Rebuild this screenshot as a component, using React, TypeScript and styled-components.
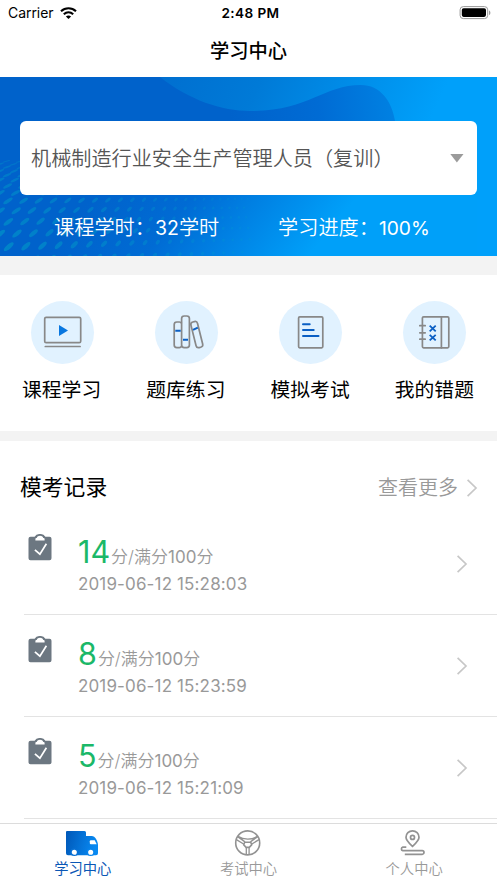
import React from "react";
import styled, { createGlobalStyle } from "styled-components";

const GlobalStyle = createGlobalStyle`
  * { box-sizing: border-box; }
  body {
    margin: 0;
    background: #fff;
    font-family: Inter, "Noto Sans CJK SC", sans-serif;
    color: #000;
  }
`;

const Screen = styled.div`
  display: flex;
  flex-direction: column;
  height: 883px;
  overflow: hidden;
  background: #fff;
`;

const StatusBar = styled.header`
  display: grid;
  grid-template-columns: 1fr auto 1fr;
  align-items: center;
  height: 26px;
  padding: 0 6px 0 8px;
  font-size: 14px;
  line-height: 26px;
`;

const Carrier = styled.div`
  display: flex;
  align-items: center;
  gap: 6px;
  letter-spacing: -0.05px;
`;

const Clock = styled.div`
  margin-left: 2px;
  font-size: 13.6px;
  font-weight: 600;
  letter-spacing: 0.4px;
`;

const BatterySlot = styled.div`
  display: flex;
  justify-content: flex-end;
`;

const TitleBar = styled.h1`
  height: 51px;
  margin: 0;
  text-align: center;
  font-size: 19.3px;
  font-weight: 500;
  line-height: 51px;
`;

const Hero = styled.section`
  position: relative;
  height: 179px;
  padding: 44px 20px 0;
  overflow: hidden;
  flex: none;
`;

const HeroArt = styled.svg`
  position: absolute;
  inset: 0;
`;

const CourseSelect = styled.div`
  position: relative;
  display: flex;
  align-items: center;
  justify-content: space-between;
  height: 74px;
  padding: 0 13px 0 11px;
  border-radius: 6px;
  background: #fff;
  color: #555;
  font-family: "Noto Sans CJK SC", sans-serif;
  font-size: 20.15px;
  font-weight: 350;
  white-space: nowrap;
`;

const CourseName = styled.span`
  padding-bottom: 2px;
`;

const Stats = styled.div`
  position: relative;
  display: flex;
  padding: 17px 0 0 34px;
  color: #fff;
  font-size: 20.2px;
  font-weight: 350;
  line-height: 31px;
  white-space: nowrap;
`;

const Stat = styled.div<{ $width?: number }>`
  width: ${(p) => (p.$width ? `${p.$width}px` : "auto")};
`;

const Latin = styled.span<{ $size: number; $track?: number }>`
  font-size: ${(p) => p.$size}px;
  font-weight: 400;
  letter-spacing: ${(p) => p.$track ?? 0}px;
`;

const Divider = styled.div<{ $height: number }>`
  flex: none;
  height: ${(p) => p.$height}px;
  background: #f3f3f3;
`;

const Shortcuts = styled.nav`
  display: grid;
  grid-template-columns: repeat(4, 1fr);
  flex: none;
  height: 156px;
  padding-top: 26px;
`;

const Shortcut = styled.div`
  display: flex;
  flex-direction: column;
  align-items: center;
  font-size: 19.8px;
  line-height: 30px;
  gap: 11px;
  white-space: nowrap;
`;

const ShortcutLabel = styled.div`
  margin-right: 1px;
`;

const Disc = styled.div`
  width: 63px;
  height: 63px;
  border-radius: 50%;
  background: #e1f2ff;
`;

const Records = styled.section`
  flex: 1;
  min-height: 0;
  overflow: hidden;
`;

const RecordsHead = styled.div`
  display: flex;
  align-items: center;
  justify-content: space-between;
  height: 72px;
  padding: 21px 19px 0 20px;
`;

const RecordsTitle = styled.h2`
  margin: 0;
  padding-bottom: 1px;
  font-size: 21.8px;
  font-weight: 400;
  line-height: 32px;
`;

const More = styled.div`
  display: flex;
  align-items: center;
  gap: 9px;
  color: #999;
  font-size: 20px;
  font-weight: 350;
  line-height: 30px;
`;

const RecordRow = styled.article`
  display: flex;
  align-items: center;
  height: 102px;
  margin-left: 24px;
  padding-right: 29px;
  border-bottom: 1px solid #e3e3e3;
`;

const ClipSlot = styled.div`
  align-self: flex-start;
  width: 54px;
  padding: 21px 0 0 4px;
`;

const RecordBody = styled.div`
  flex: 1;
  padding-top: 3px;
  color: #999;
  white-space: nowrap;
`;

const ScoreLine = styled.div`
  height: 37px;
  font-size: 17px;
  font-weight: 350;
  line-height: 36px;
`;

const Score = styled.span`
  margin-right: 1px;
  color: #1bb868;
  font-size: 30.5px;
  font-weight: 400;
`;

const DateLine = styled.div`
  font-size: 17px;
  line-height: 26px;
  letter-spacing: 0.14px;
`;

const TabBar = styled.footer`
  display: grid;
  grid-template-columns: repeat(3, 1fr);
  flex: none;
  height: 60px;
  border-top: 1px solid #dcdcdc;
  background: #fff;
`;

const Tab = styled.div<{ $active?: boolean }>`
  display: flex;
  flex-direction: column;
  align-items: center;
  padding-top: 5px;
  color: ${(p) => (p.$active ? "#0a57b5" : "#999")};
  font-size: 14.3px;
  font-weight: ${(p) => (p.$active ? 400 : 350)};
  line-height: 20px;
  svg { display: block; flex: none; }
`;

const WifiIcon = () => (
  <svg width="17" height="13" viewBox="0 0 17 13" fill="none" stroke="#000" strokeWidth="2.1">
    <path d="M1 4.2C5.3.2 11.7.2 16 4.2" />
    <path d="M3.8 7.2c2.8-2.5 6.6-2.5 9.4 0" />
    <path d="M8.5 12L5.9 9.4c1.5-1.3 3.7-1.3 5.2 0z" fill="#000" stroke="none" />
  </svg>
);

const BatteryIcon = () => (
  <svg width="32" height="14" viewBox="0 0 32 14">
    <rect x="1.1" y="0.6" width="27.6" height="12" rx="3.2" fill="none" stroke="#999" />
    <rect x="2.8" y="2.3" width="24.2" height="8.6" rx="1.8" />
    <path d="M30.2 4.4c1.5.6 1.5 4 0 4.6z" fill="#888" />
  </svg>
);

// Perspective field of dots: each row down is larger and further from the last.
const rowHeights = [86, 89, 92, 96, 100, 105, 111, 118, 126, 136, 147, 159, 172, 186];
const dots = rowHeights.flatMap((y, row) => {
  const depth = row / (rowHeights.length - 1);
  return Array.from({ length: 24 }, (_, col) => {
    const c = col - 0.5 + (row % 2) * 0.5;
    const x = c * (13 + 5 * depth) * (1 - 0.014 * c);
    const near = Math.max(0, 1 - x / 275);
    return {
      x,
      y: y - 2 + (1 - near) * 10 * (1 - depth) - (1 - near) * 10 * depth,
      rx: 0.9 + 5.8 * Math.pow(near, 1.3) * (0.5 + 0.5 * depth),
      ry: 0.6 + 1.9 * depth * (0.35 + 0.65 * near),
      a: -14 - 28 * depth - 22 * (1 - near),
      o: 0.12 + 0.42 * near * (0.4 + 0.6 * depth),
    };
  }).filter((d) => d.x < 250);
});

const HeroBackdrop = () => (
  <HeroArt width="497" height="179" viewBox="0 0 497 179">
    <defs>
      <linearGradient id="sky" gradientUnits="userSpaceOnUse" x1="160" y1="0" x2="400" y2="110">
        <stop offset="0" stopColor="#006fd0" />
        <stop offset="0.35" stopColor="#007ad7" />
        <stop offset="1" stopColor="#00a0fa" />
      </linearGradient>
      <linearGradient id="deep" gradientUnits="userSpaceOnUse" x1="140" y1="60" x2="300" y2="190">
        <stop offset="0" stopColor="#0062cb" />
        <stop offset="0.38" stopColor="#006bd4" />
        <stop offset="1" stopColor="#00a0f9" />
      </linearGradient>
      <linearGradient id="crest" gradientUnits="userSpaceOnUse" x1="230" y1="40" x2="405" y2="30">
        <stop offset="0" stopColor="#0062cb" />
        <stop offset="0.5" stopColor="#006bd4" />
        <stop offset="1" stopColor="#0084e4" />
      </linearGradient>
    </defs>
    <rect width="497" height="179" fill="url(#sky)" />
    <path d="M0 0H160C189 23 222 34 250 34C309 34 323 8 361 8C380 8 392 24 395 44V80H0Z" fill="url(#crest)" />
    <rect y="80" width="477" height="99" fill="url(#deep)" />
    {dots.map((d, i) => (
      <ellipse key={i} cx={d.x} cy={d.y} rx={d.rx} ry={d.ry} fill="#00a5c8" opacity={d.o}
        transform={`rotate(${d.a} ${d.x} ${d.y})`} />
    ))}
  </HeroArt>
);

const CaretIcon = () => (
  <svg width="14" height="9" viewBox="0 0 14 9"><path d="M0.3 0h13.2L6.9 8.6z" fill="#9b9b9b" /></svg>
);

const ChevronIcon = () => (
  <svg width="11" height="18" viewBox="0 0 11 18" fill="none" stroke="#c7c7c7" strokeWidth="1.7">
    <path d="M.6 .8L9 9 .6 17.2" />
  </svg>
);

const VideoIcon = () => (
  <svg width="63" height="63" viewBox="0 0 63 63" fill="none" stroke="#888" strokeWidth="1.7">
    <rect x="13.7" y="16.3" width="36" height="25.4" rx="1.4" />
    <path d="M14.3 45.5h34.8" strokeLinecap="round" />
    <path d="M28 24v11l9-5.5z" fill="#0877e0" stroke="none" />
  </svg>
);

const BooksIcon = () => (
  <svg width="63" height="63" viewBox="0 0 63 63" fill="none" stroke="#888" strokeWidth="1.7">
    <path d="M26.6 22.4a2.4 2.4 0 0 0-2.2-1.4h-2.6a2.6 2.6 0 0 0-2.6 2.6v20.4a2.6 2.6 0 0 0 2.6 2.6h2.6a2.4 2.4 0 0 0 2.2-1.4" />
    <rect x="26.6" y="15" width="7.8" height="31.6" rx="2.6" />
    <rect x="-3.4" y="-13.2" width="6.8" height="26.4" rx="2.6" transform="translate(41.8 33.6) rotate(-14)" />
    <path d="M20.3 29.7h5.4M28 38.7h5M38 28.9l4.8-2.2" stroke="#0a5fc4" strokeWidth="2" />
  </svg>
);

const PaperIcon = () => (
  <svg width="63" height="63" viewBox="0 0 63 63" fill="none" stroke="#888" strokeWidth="1.7">
    <rect x="19.6" y="15.8" width="24.2" height="31" rx="1.2" />
    <path d="M24 23.2h6.7M24 29h10.7M24 35h15.5" stroke="#0a5fc4" strokeWidth="2" strokeLinecap="round" />
  </svg>
);

const NotebookIcon = () => (
  <svg width="63" height="63" viewBox="0 0 63 63" fill="none" stroke="#888" strokeWidth="1.7">
    <rect x="19.4" y="15.8" width="26.4" height="31" rx="1.2" />
    <path d="M38.4 15.8v31M16.8 24.7h5.4M16.8 31.8h5.4M16.8 38.2h5.4" strokeLinecap="round" />
    <path d="M26.7 24.7l6 5.6M32.7 24.7l-6 5.6M26.7 33.8l6 5.6M32.7 33.8l-6 5.6" stroke="#0a5fc4" strokeWidth="1.8" />
  </svg>
);

const ClipboardIcon = () => (
  <svg width="24" height="28" viewBox="0 0 24 28">
    <path d="M2.5 2.8h4.1a6.2 5.6 0 0 1 10.8 0h4.1a2 2 0 0 1 2 2v19.4a2 2 0 0 1-2 2h-19a2 2 0 0 1-2-2V4.8a2 2 0 0 1 2-2z" fill="#6c7781" />
    <path d="M7.4 6.6V4.9c0-.5.5-.8 1.3-.8.8-3.2 5.8-3.2 6.6 0 .8 0 1.3.3 1.3.8v1.7z" fill="#fff" />
    <path d="M6.9 15.8l5 4.4 6.5-10.4" fill="none" stroke="#fff" strokeWidth="1.7" />
  </svg>
);

const TruckIcon = () => (
  <svg width="36" height="30" viewBox="0 0 36 30">
    <defs>
      <linearGradient id="truck" x1="0" y1="0" x2="1" y2="0.2">
        <stop offset="0" stopColor="#0057b7" />
        <stop offset="1" stopColor="#0889f2" />
      </linearGradient>
    </defs>
    <path d="M2 2h17.5a1.5 1.5 0 0 1 1.5 1.5V7h5.8c3.2 0 6.2 5 6.2 9v8.3a2 2 0 0 1-2 2H3a2 2 0 0 1-2-2V3a1 1 0 0 1 1-1z" fill="url(#truck)" />
    <path d="M24.8 12.3a1 1 0 0 1 1-1h3.9l2 4h-5.9a1 1 0 0 1-1-1z" fill="#fff" />
    <circle cx="9.3" cy="23.2" r="3.2" fill="#fff" stroke="#0870d4" strokeWidth="1.3" />
    <circle cx="25.7" cy="23.2" r="3.2" fill="#fff" stroke="#0884ec" strokeWidth="1.3" />
  </svg>
);

const WheelIcon = () => (
  <svg width="34" height="30" viewBox="0 0 34 30" fill="none" stroke="#929292" strokeWidth="1.6">
    <circle cx="16.7" cy="13.9" r="12" />
    <path d="M13.7 13.2h6l1 2.6-2.4 2.6h-3.2l-2.4-2.6z" />
    <path d="M6.6 7.6l7.4 5.3M26.8 7.6l-7.4 5.3M5.4 10.6l7.6 4.6M28 10.6l-7.6 4.6M15.3 18.4v7.4M18.1 18.4v7.4M7 7.4c5.8 3.6 13.6 3.6 19.4 0" strokeWidth="1.3" />
  </svg>
);

const PinIcon = () => (
  <svg width="36" height="30" viewBox="0 0 36 30" fill="none" stroke="#929292" strokeWidth="1.7">
    <path d="M16.5 17.3c-3-2.7-6.5-5.6-6.5-9a6.5 6.5 0 0 1 13 0c0 3.4-3.5 6.3-6.5 9z" />
    <circle cx="16.5" cy="8.4" r="2" />
    <path d="M10.3 18.2H6.8a1.8 1.8 0 0 0 0 3.5h19.4a1.8 1.8 0 0 1 0 3.6H8.8" />
  </svg>
);

const shortcuts = [
  { label: "课程学习", Icon: VideoIcon },
  { label: "题库练习", Icon: BooksIcon },
  { label: "模拟考试", Icon: PaperIcon },
  { label: "我的错题", Icon: NotebookIcon },
];

const records = [
  { score: 14, date: "2019-06-12 15:28:03" },
  { score: 8, date: "2019-06-12 15:23:59" },
  { score: 5, date: "2019-06-12 15:21:09" },
];

export default function App() {
  return (
    <>
      <GlobalStyle />
      <Screen>
        <StatusBar>
          <Carrier>Carrier <WifiIcon /></Carrier>
          <Clock>2:48 PM</Clock>
          <BatterySlot><BatteryIcon /></BatterySlot>
        </StatusBar>
        <TitleBar>学习中心</TitleBar>
        <Hero>
          <HeroBackdrop />
          <CourseSelect>
            <CourseName>机械制造行业安全生产管理人员（复训）</CourseName>
            <CaretIcon />
          </CourseSelect>
          <Stats>
            <Stat $width={224}>课程学时：<Latin $size={19.5}>32</Latin>学时</Stat>
            <Stat>学习进度：<Latin $size={19.2}>100%</Latin></Stat>
          </Stats>
        </Hero>
        <Divider $height={19} />
        <Shortcuts>
          {shortcuts.map(({ label, Icon }) => (
            <Shortcut key={label}><Disc><Icon /></Disc><ShortcutLabel>{label}</ShortcutLabel></Shortcut>
          ))}
        </Shortcuts>
        <Divider $height={10} />
        <Records>
          <RecordsHead>
            <RecordsTitle>模考记录</RecordsTitle>
            <More>查看更多<ChevronIcon /></More>
          </RecordsHead>
          {records.map((r) => (
            <RecordRow key={r.date}>
              <ClipSlot><ClipboardIcon /></ClipSlot>
              <RecordBody>
                <ScoreLine><Score>{r.score}</Score>分/满分<Latin $size={17}>100</Latin>分</ScoreLine>
                <DateLine>{r.date}</DateLine>
              </RecordBody>
              <ChevronIcon />
            </RecordRow>
          ))}
        </Records>
        <TabBar>
          <Tab $active><TruckIcon />学习中心</Tab>
          <Tab><WheelIcon />考试中心</Tab>
          <Tab><PinIcon />个人中心</Tab>
        </TabBar>
      </Screen>
    </>
  );
}
